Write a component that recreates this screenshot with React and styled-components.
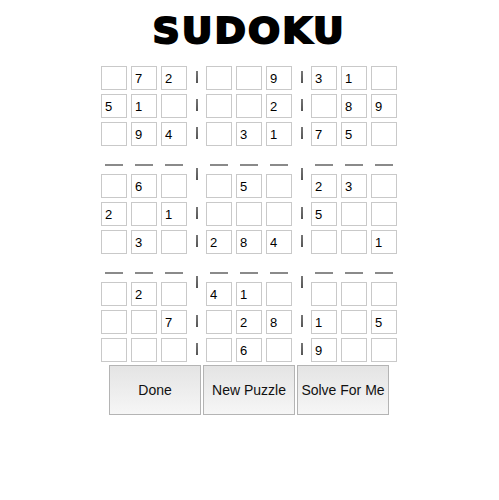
import React from 'react';
import styled, { createGlobalStyle } from 'styled-components';

const GlobalStyle = createGlobalStyle`
  body {
    margin: 0;
    background: #fff;
    font-family: "Liberation Sans", Arial, sans-serif;
  }
`;

const Page = styled.div`
  display: flex;
  flex-direction: column;
  align-items: center;
  padding-top: 13px;
  padding-right: 1px;
`;

const Title = styled.h1`
  margin: 0 0 17px 0;
  font-family: "DejaVu Sans", sans-serif;
  font-weight: bold;
  font-size: 36px;
  line-height: 36px;
  letter-spacing: 2px;
  color: #000;
  -webkit-text-stroke: 2px #000;
  transform: scaleX(1.05);
`;

const Board = styled.div`
  display: flex;
  flex-direction: column;
  gap: 4px;
`;

const Row = styled.div`
  display: flex;
  gap: 4px;
  height: 24px;
`;

const Cell = styled.input`
  box-sizing: border-box;
  width: 26px;
  height: 24px;
  margin: 0;
  padding: 0 0 0 3px;
  border: 1px solid #c9c9c9;
  border-radius: 0;
  background: #fff;
  font-family: "Liberation Sans", Arial, sans-serif;
  font-size: 13px;
  color: #000;
  outline: none;
`;

const Sep = styled.div`
  width: 11px;
  display: flex;
  justify-content: center;
  align-items: flex-start;
  span {
    display: block;
    width: 2px;
    height: 12px;
    margin-top: ${(props) => (props.raised ? '-6px' : '5px')};
    background: linear-gradient(#777, #555);
  }
`;

const DashRow = styled.div`
  display: flex;
  gap: 4px;
  height: 20px;
`;

const DashSlot = styled.div`
  width: 26px;
  display: flex;
  justify-content: center;
  span {
    display: block;
    width: 18px;
    height: 2px;
    margin-top: 14px;
    background: #8a8a8a;
  }
`;

const Gap = styled.div`
  width: 11px;
`;

const Buttons = styled.div`
  display: flex;
  gap: 2px;
  margin-top: 3px;
  button {
    width: 92px;
    height: 50px;
    border: 1px solid #b4b4b4;
    border-radius: 0;
    background: linear-gradient(#e4e4e4, #f6f6f6);
    font-family: "Liberation Sans", Arial, sans-serif;
    font-size: 14px;
    color: #111;
    padding: 0;
    cursor: pointer;
  }
`;

const puzzle = [
  '072009310',
  '510002089',
  '094031750',
  '060050230',
  '201000500',
  '030284001',
  '020410000',
  '007028105',
  '000060900',
];

const BoardRow = ({ digits, raised }) => {
  const items = [];
  digits.split('').forEach((d, i) => {
    if (i === 3 || i === 6) {
      items.push(
        <Sep key={'s' + i} raised={raised ? 1 : 0}>
          <span />
        </Sep>
      );
    }
    items.push(<Cell key={i} type='text' defaultValue={d === '0' ? '' : d} maxLength={1} />);
  });
  return <Row>{items}</Row>;
};

const Dashes = () => {
  const items = [];
  for (let i = 0; i < 9; i++) {
    if (i === 3 || i === 6) items.push(<Gap key={'g' + i} />);
    items.push(
      <DashSlot key={i}>
        <span />
      </DashSlot>
    );
  }
  return <DashRow>{items}</DashRow>;
};

const App = () => {
  return (
    <Page>
      <GlobalStyle />
      <Title>SUDOKU</Title>
      <Board>
        {puzzle.map((r, i) => (
          <React.Fragment key={i}>
            {(i === 3 || i === 6) && <Dashes />}
            <BoardRow digits={r} raised={i === 3 || i === 6} />
          </React.Fragment>
        ))}
      </Board>
      <Buttons>
        <button>Done</button>
        <button>New Puzzle</button>
        <button>Solve For Me</button>
      </Buttons>
    </Page>
  );
};

export default App;
